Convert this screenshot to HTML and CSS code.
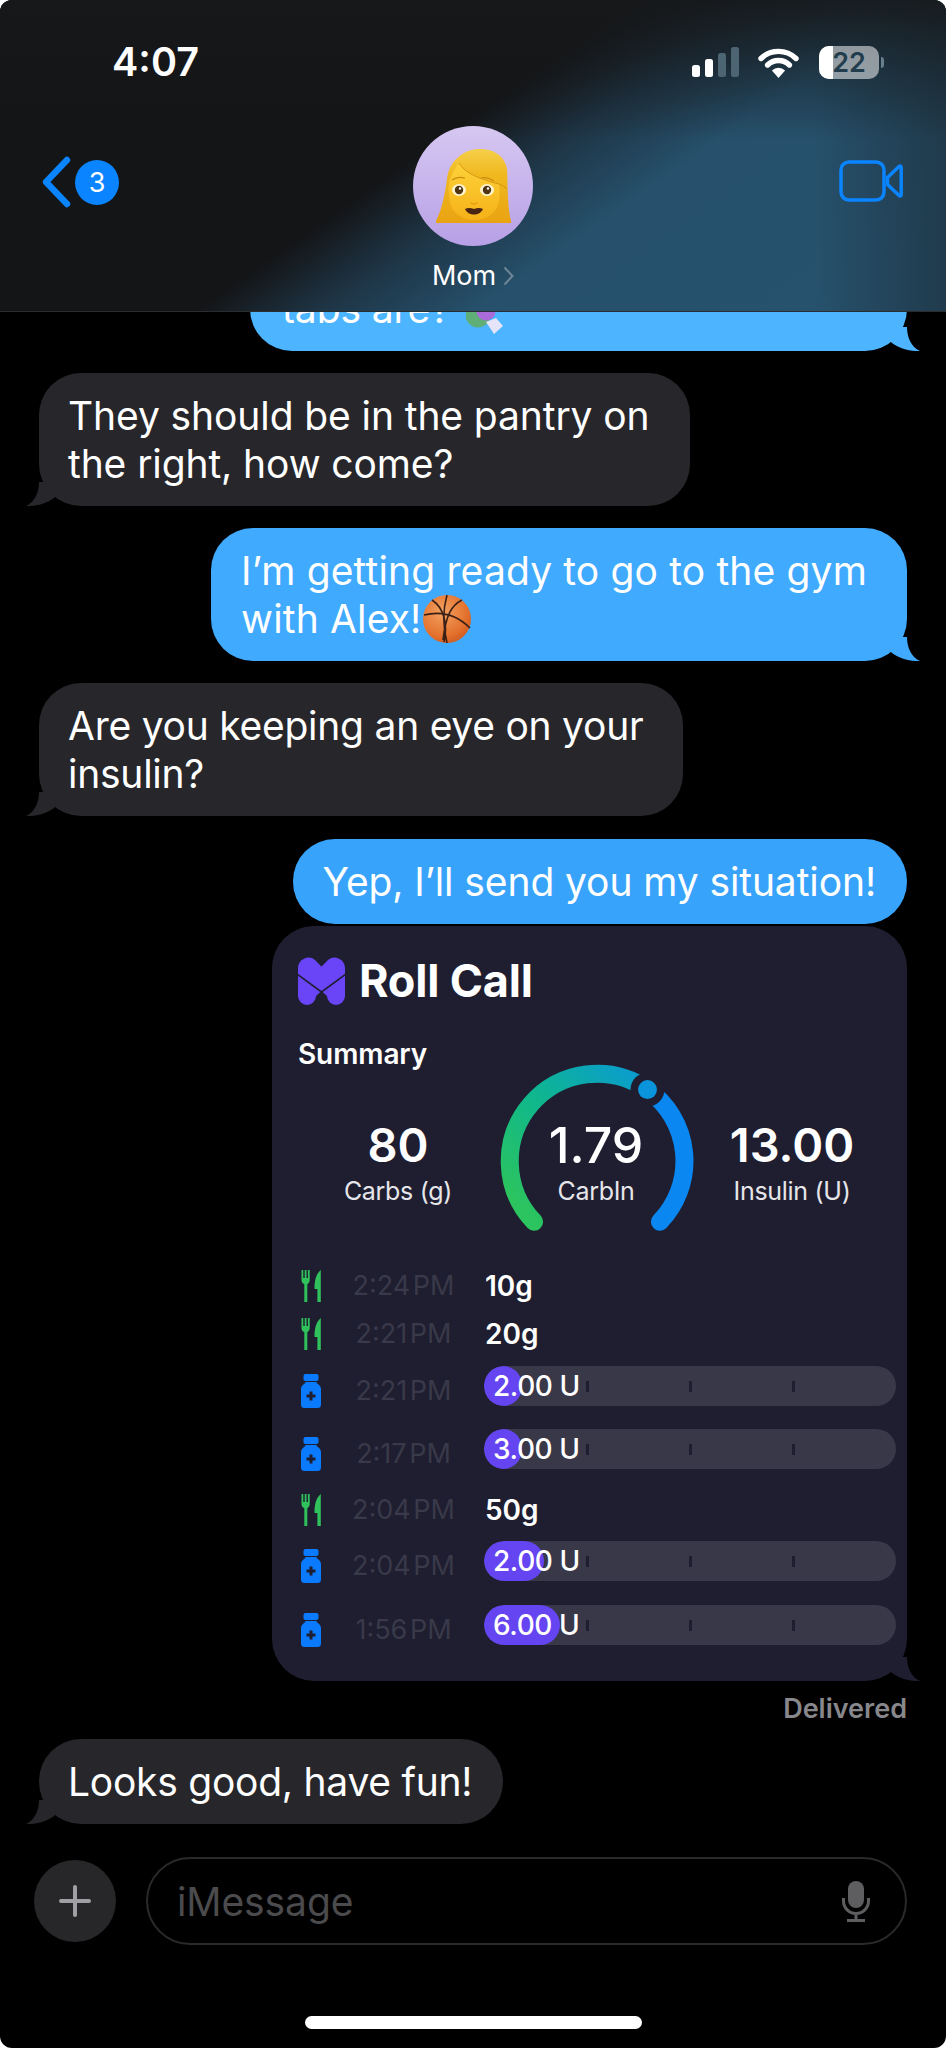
FILE: index.html
```html
<!DOCTYPE html>
<html lang="en">
<head>
    <meta charset="UTF-8">
    <meta name="viewport" content="width=device-width, initial-scale=1.0">
    <title>Mom - iMessage</title>
    <link rel="stylesheet" href="styles.css">
</head>
<body>
<div class="screen">

    <!-- Status bar and contact header -->
    <header class="header">
        <div class="status">
            <span class="clock">4:07</span>
            <div class="status-icons">
                <div class="signal">
                    <i class="bar-1"></i><i class="bar-2"></i><i class="bar-3"></i><i class="bar-4"></i>
                </div>
                <svg class="wifi" viewBox="0 0 41 31">
                    <path d="M3 11.5a25 25 0 0 1 35 0M9.6 18a15.6 15.6 0 0 1 21.8 0" fill="none" stroke="#fff" stroke-width="5.4" stroke-linecap="round"/>
                    <path d="M20.5 31l-6.6-7.6a9.6 9.6 0 0 1 13.2 0z" fill="#fff"/>
                </svg>
                <div class="battery">
                    <div class="battery-body"><span class="battery-level"></span><b>22</b></div>
                    <span class="battery-nub"></span>
                </div>
            </div>
        </div>
        <div class="nav">
            <div class="back">
                <svg class="chevron" viewBox="0 0 30 52"><path d="M26 4L5 26l21 22" fill="none" stroke="#0a84ff" stroke-width="6.4" stroke-linecap="round" stroke-linejoin="round"/></svg>
                <span class="badge">3</span>
            </div>
            <div class="contact">
                <div class="avatar">
                    <svg class="woman" viewBox="0 0 75 75">
                        <defs>
                            <linearGradient id="hair" x1="0" y1="0" x2="0" y2="1"><stop offset="0" stop-color="#f6cf4a"/><stop offset=".35" stop-color="#f0b81f"/><stop offset="1" stop-color="#e9a312"/></linearGradient>
                            <linearGradient id="face" x1="0" y1="0" x2="0" y2="1"><stop offset="0" stop-color="#fdd23a"/><stop offset="1" stop-color="#f6b118"/></linearGradient>
                        </defs>
                        <path d="M0 72C6 60 9 45 11 30 13 12 27 1 42 0c15-1 27 7 29 20 1 16 0 36 4 52v2H0z" fill="url(#hair)"/>
                        <path d="M13 35c1-8 6-15 10-21 6 11 24 17 40 21 1 7 1 14-1 21-4 10-13 15-24 15-12 0-21-7-24-17-1-6-2-13-1-19z" fill="url(#face)"/>
                        <path d="M23 14c6 11 24 17 40 21 3 1 6 3 8 5" fill="none" stroke="#d18d10" stroke-width=".8"/>
                        <ellipse cx="23" cy="41" rx="7" ry="6" fill="#fff4cf"/>
                        <ellipse cx="51" cy="41" rx="7" ry="6" fill="#fff4cf"/>
                        <circle cx="23" cy="41" r="4.2" fill="#4f3512"/>
                        <circle cx="51" cy="41" r="4.2" fill="#4f3512"/>
                        <circle cx="24" cy="39.500" r="1.200" fill="#fff"/>
                        <circle cx="52" cy="39.500" r="1.200" fill="#fff"/>
                        <path d="M16 31c4-3 9-3 13-2M45 29c4-1 9 0 13 3" fill="none" stroke="#c98a12" stroke-width="1.200"/>
                        <path d="M29 60c3-1.500 6-1 9 0 3-1 6-1.500 9 0-2 4-5 5.500-9 5.500s-7-1.500-9-5.500z" fill="#4a2513"/>
                        <path d="M35 54c2 1.500 4 1.500 6 0" fill="none" stroke="#e39c10" stroke-width="1.400" stroke-linecap="round"/>
                    </svg>
                </div>
                <div class="contact-name">Mom <svg class="name-chevron" viewBox="0 0 11 20"><path d="M1.500 1.500L9.500 10l-8 8.500" fill="none" stroke="#6f8796" stroke-width="2"/></svg></div>
            </div>
            <svg class="video" viewBox="0 0 64 44">
                <rect x="2" y="3" width="43" height="38" rx="8" fill="none" stroke="#0a84ff" stroke-width="3.500"/>
                <path d="M48.500 18.500L60 7.500c1.200-1 2.200-.5 2.200 1v27c0 1.500-1 2-2.200 1L48.500 25.500z" fill="none" stroke="#0a84ff" stroke-width="3.500" stroke-linejoin="round"/>
            </svg>
        </div>
    </header>

    <!-- Conversation -->
    <main class="thread">
        <div class="bubble sent clipped tone-1">
            <p>tabs are?<svg class="pill" viewBox="0 0 37 36">
                    <circle cx="12" cy="17" r="12.500" fill="#5fae78"/>
                    <circle cx="20" cy="13" r="9.500" fill="#a86bd8"/>
                    <path d="M20 24l10-4 7 8-9 8z" fill="#e6e4f8"/>
                </svg></p>
            <svg class="tail" viewBox="0 0 34 24"><use href="#tail-shape"/></svg>
        </div>

        <div class="bubble received wide">
            <p>They should be in the pantry on<br>the right, how come?</p>
            <svg class="tail" viewBox="0 0 34 24"><use href="#tail-shape"/></svg>
        </div>

        <div class="bubble sent wide tone-2">
            <p>I’m getting ready to go to the gym<br>with Alex!<svg class="ball" viewBox="0 0 48 48">
                <defs><radialGradient id="orange" cx=".4" cy=".35" r=".75"><stop offset="0" stop-color="#f4a262"/><stop offset=".7" stop-color="#e3702c"/><stop offset="1" stop-color="#c9541c"/></radialGradient></defs>
                <circle cx="24" cy="24" r="24" fill="url(#orange)"/>
                <path d="M24 0c-4 14-4 32 0 48M1 20c16-4 32-1 46 13M9 5c12 8 16 24 12 42M39 5c-10 5-16 14-19 40" fill="none" stroke="#3a2015" stroke-width="1.600"/>
            </svg></p>
            <svg class="tail" viewBox="0 0 34 24"><use href="#tail-shape"/></svg>
        </div>

        <div class="bubble received wide tight">
            <p>Are you keeping an eye on your<br>insulin?</p>
            <svg class="tail" viewBox="0 0 34 24"><use href="#tail-shape"/></svg>
        </div>

        <div class="bubble sent tone-3">
            <p>Yep, I’ll send you my situation!</p>
        </div>

        <!-- Roll Call card -->
        <section class="card">
            <div class="card-title">
                <svg class="logo" viewBox="0 0 47 48">
                    <path d="M23.500 9.500L17 3A10.500 10.500 0 0 0 0 11v28a9 9 0 0 0 18 0l5.500-5 5.500 5a9 9 0 0 0 18 0V11A10.500 10.500 0 0 0 30 3z" fill="#6a45f7"/>
                    <path d="M-1 17l24.500 18L48 17" fill="none" stroke="#1e1e30" stroke-width="1.600"/>
                </svg>
                <h2>Roll Call</h2>
            </div>
            <h3 class="summary-title">Summary</h3>
            <div class="summary">
                <div class="stat">
                    <strong>80</strong>
                    <span>Carbs (g)</span>
                </div>
                <div class="gauge">
                    <svg class="gauge-arc" viewBox="0 0 194 170">
                        <defs>
                            <linearGradient id="arcGreen" gradientUnits="userSpaceOnUse" x1="25" y1="150" x2="150" y2="20"><stop offset="0" stop-color="#2cc45e"/><stop offset=".5" stop-color="#0fb78c"/><stop offset="1" stop-color="#0a9ccf"/></linearGradient>
                        </defs>
                        <path d="M34.100 157.800A87.500 87.500 0 0 1 147.500 25.600" fill="none" stroke="url(#arcGreen)" stroke-width="18" stroke-linecap="round"/>
                        <path d="M147.500 25.600A87.500 87.500 0 0 1 159.900 157.800" fill="none" stroke="#0a87f0" stroke-width="18" stroke-linecap="round"/>
                        <circle cx="147.500" cy="25.600" r="17" fill="#1e1e30"/>
                        <circle cx="147.500" cy="25.600" r="9.500" fill="#0a94dc"/>
                    </svg>
                    <div class="stat stat-center">
                        <strong>1.79</strong>
                        <span>CarbIn</span>
                    </div>
                </div>
                <div class="stat">
                    <strong>13.00</strong>
                    <span>Insulin (U)</span>
                </div>
            </div>

            <div class="log">
                <div class="log-row meal">
                    <svg class="icon-meal"><use href="#fork-knife"/></svg>
                    <span class="log-time">2:24 PM</span>
                    <span class="log-amount">10g</span>
                </div>
                <div class="log-row meal">
                    <svg class="icon-meal"><use href="#fork-knife"/></svg>
                    <span class="log-time">2:21 PM</span>
                    <span class="log-amount">20g</span>
                </div>
                <div class="log-row dose">
                    <svg class="icon-dose"><use href="#bottle"/></svg>
                    <span class="log-time">2:21 PM</span>
                    <div class="dose-bar">
                        <div class="dose-fill" style="width: 38px"></div>
                        <span class="dose-label">2.00 U</span>
                        <div class="ticks"><i></i><i></i><i></i></div>
                    </div>
                </div>
                <div class="log-row dose">
                    <svg class="icon-dose"><use href="#bottle"/></svg>
                    <span class="log-time">2:17 PM</span>
                    <div class="dose-bar">
                        <div class="dose-fill" style="width: 38px"></div>
                        <span class="dose-label">3.00 U</span>
                        <div class="ticks"><i></i><i></i><i></i></div>
                    </div>
                </div>
                <div class="log-row meal late">
                    <svg class="icon-meal"><use href="#fork-knife"/></svg>
                    <span class="log-time">2:04 PM</span>
                    <span class="log-amount">50g</span>
                </div>
                <div class="log-row dose tall">
                    <svg class="icon-dose"><use href="#bottle"/></svg>
                    <span class="log-time">2:04 PM</span>
                    <div class="dose-bar">
                        <div class="dose-fill" style="width: 60px"></div>
                        <span class="dose-label">2.00 U</span>
                        <div class="ticks"><i></i><i></i><i></i></div>
                    </div>
                </div>
                <div class="log-row dose">
                    <svg class="icon-dose"><use href="#bottle"/></svg>
                    <span class="log-time">1:56 PM</span>
                    <div class="dose-bar">
                        <div class="dose-fill" style="width: 76px"></div>
                        <span class="dose-label">6.00 U</span>
                        <div class="ticks"><i></i><i></i><i></i></div>
                    </div>
                </div>
            </div>
            <svg class="tail" viewBox="0 0 34 24"><use href="#tail-shape"/></svg>
        </section>

        <div class="delivered">Delivered</div>

        <div class="bubble received tight">
            <p>Looks good, have fun!</p>
            <svg class="tail" viewBox="0 0 34 24"><use href="#tail-shape"/></svg>
        </div>
    </main>

    <!-- Message box -->
    <footer class="composer">
        <div class="plus">
            <svg viewBox="0 0 32 32"><path d="M16 2v28M2 16h28" stroke="#a0a0a4" stroke-width="4" stroke-linecap="round"/></svg>
        </div>
        <div class="input">
            <span class="placeholder">iMessage</span>
            <svg class="mic" viewBox="0 0 28 41">
                <rect x="6" y="0" width="16" height="27" rx="8" fill="#5e5e60"/>
                <path d="M1.500 17v3a12.500 12.500 0 0 0 25 0v-3M14 33v6M5 39.500h18" fill="none" stroke="#5e5e60" stroke-width="3"/>
            </svg>
        </div>
    </footer>
    <div class="home-bar"></div>
</div>

<!-- Shared shapes -->
<svg class="defs" width="0" height="0">
    <defs>
        <path id="tail-shape" d="M20 0c0 10 4 20 13 24C24 24.500 12 22 3.700 15L0 0z"/>
    </defs>
    <symbol id="fork-knife" viewBox="0 0 20 32">
        <path d="M.5 0h1.800v8h1.400V0h1.800v8h1.400V0h1.800v10c0 2.500-1.200 3.500-2.400 4.200V32H3.300V14.200C1.800 13.500.5 12.500.5 10z" fill="#30c05c"/>
        <path d="M19.800 0v32h-3.400V19h-2.900c0-8 1.300-15 6.300-19z" fill="#30c05c"/>
    </symbol>
    <symbol id="bottle" viewBox="0 0 20 34">
        <rect x="2.500" width="15" height="7" rx="2" fill="#0a7bff"/>
        <path d="M4.500 8h11c0 2 4.500 3 4.500 7v15.500a3.500 3.500 0 0 1-3.500 3.500h-13A3.500 3.500 0 0 1 0 30.500V15c0-4 4.500-5 4.500-7z" fill="#0a7bff"/>
        <path d="M8.500 17.500h3v3h3v3h-3v3h-3v-3h-3v-3h3z" fill="#1e1e30"/>
    </symbol>
</svg>
</body>
</html>
```

FILE: styles.css
```css
* {
    box-sizing: border-box;
}
body {
    margin: 0;
    background: #fff;
    font-family: Inter, "Noto Sans", sans-serif;
    color: #fff;
}
p, h2, h3 {
    margin: 0;
}
.defs {
    position: absolute;
}
.screen {
    width: 946px;
    height: 2048px;
    background: #000;
    border-radius: 12px;
    overflow: hidden;
    display: flex;
    flex-direction: column;
}

/* Header */
.header {
    height: 312px;
    flex: none;
    position: relative;
    z-index: 2;
    border-bottom: 1px solid #2a2c2e;
    background:
        linear-gradient(180deg, rgba(22, 24, 26, 0.9) 0, rgba(22, 24, 26, 0) 45%),
        linear-gradient(270deg, rgba(22, 24, 26, 0.4) 0, rgba(22, 24, 26, 0) 14%),
        linear-gradient(145deg, #141517 0%, #141517 46%, #1e3546 55%, #26506b 66%, #27526e 100%);
}
.status {
    display: flex;
    justify-content: space-between;
    padding: 44px 62px 0 112px;
    height: 126px;
}
.clock {
    font-size: 39.5px;
    font-weight: 600;
    line-height: 36px;
}
.status-icons {
    display: flex;
    gap: 19px;
    height: 34px;
    align-items: flex-start;
}
.signal {
    display: flex;
    align-items: flex-end;
    gap: 5px;
    height: 33px;
}
.signal i {
    width: 8px;
    border-radius: 2.5px;
    background: #fff;
}
.signal .bar-1 { height: 12px; }
.signal .bar-2 { height: 18px; }
.signal .bar-3 { height: 24px; background: #4d6572; }
.signal .bar-4 { height: 30px; background: #4d6572; }
.wifi {
    width: 41px;
    height: 31px;
    margin-top: 3px;
}
.battery {
    display: flex;
    align-items: center;
    gap: 2px;
    margin-top: 2px;
    margin-left: 1px;
}
.battery-body {
    width: 60px;
    height: 33px;
    border-radius: 10px;
    background: rgba(255, 255, 255, 0.52);
    overflow: hidden;
    position: relative;
    text-align: center;
    color: #223d4d;
    font-size: 27px;
    line-height: 33px;
}
.battery-body b {
    position: relative;
    font-weight: 600;
}
.battery-level {
    position: absolute;
    left: 0;
    top: 0;
    bottom: 0;
    width: 14px;
    background: #fff;
}
.battery-nub {
    width: 3px;
    height: 11px;
    border-radius: 0 3px 3px 0;
    background: #66808e;
}
.nav {
    display: grid;
    grid-template-columns: 1fr auto 1fr;
    padding: 0 43px 0 41px;
    align-items: start;
}
.back {
    display: flex;
    align-items: center;
    gap: 4px;
    margin-top: 30px;
}
.chevron {
    width: 30px;
    height: 52px;
}
.badge {
    width: 44px;
    height: 45px;
    border-radius: 50%;
    background: #0a84ff;
    text-align: center;
    font-size: 27px;
    line-height: 45px;
}
.contact {
    display: flex;
    flex-direction: column;
    align-items: center;
    margin-left: 2px;
}
.avatar {
    width: 120px;
    height: 120px;
    border-radius: 50%;
    background: linear-gradient(#d6c7f1, #b7a0e6);
    display: flex;
    align-items: center;
    justify-content: center;
}
.woman {
    width: 75px;
    height: 75px;
}
.contact-name {
    margin-top: 15px;
    font-size: 27px;
    line-height: 30px;
    display: flex;
    align-items: center;
    gap: 7px;
}
.name-chevron {
    width: 11px;
    height: 20px;
}
.video {
    justify-self: end;
    width: 64px;
    height: 44px;
    margin-top: 33px;
}

/* Messages */
.thread {
    flex: 1;
    min-height: 0;
    display: flex;
    flex-direction: column;
    padding: 0 39px;
}
.bubble {
    position: relative;
    flex: none;
    font-size: 39px;
    line-height: 48px;
    letter-spacing: -0.1px;
    padding: 18.5px 31px 18.5px 30px;
    border-radius: 42px;
    white-space: nowrap;
}
.bubble.wide {
    padding-right: 40px;
}
.bubble.tight {
    letter-spacing: -0.25px;
}
.tail {
    position: absolute;
    bottom: 0;
    width: 34px;
    height: 24px;
    fill: currentColor;
}
.sent {
    align-self: flex-end;
    background: #42abff;
}
.sent .tail, .card .tail {
    right: -14px;
}
.received {
    align-self: flex-start;
    background: #27272b;
    margin-top: 22px;
    padding-left: 29px;
}
.received .tail {
    left: -14px;
    transform: scaleX(-1);
    color: #27272b;
}
.bubble + .sent {
    margin-top: 22px;
}
.clipped {
    width: 657px;
    height: 85px;
    margin-top: -46px;
    padding-left: 32px;
}
.tone-1 { background: #4db4ff; }
.tone-1 .tail { color: #4db4ff; }
.tone-2 { background: #40aaff; letter-spacing: 0.15px; }
.tone-2 .tail { color: #40aaff; }
.bubble.tone-3 { background: #38a3fb; margin-top: 23px; }
.pill {
    width: 37px;
    height: 36px;
    margin: -15px 0 -11px 16px;
}
.ball {
    width: 48px;
    height: 48px;
    margin: -10px 0 -10px 2px;
}

/* Roll Call card */
.card {
    position: relative;
    flex: none;
    align-self: flex-end;
    width: 635px;
    height: 755px;
    margin-top: 2px;
    padding: 31px 11px 0 26px;
    border-radius: 42px;
    background: #1e1e30;
}
.card .tail {
    color: #1e1e30;
}
.card-title {
    display: flex;
    align-items: center;
    gap: 14px;
}
.logo {
    width: 47px;
    height: 48px;
}
.card-title h2 {
    font-size: 45px;
    font-weight: 700;
    letter-spacing: -0.2px;
    line-height: 48px;
}
.summary-title {
    margin-top: 33px;
    font-size: 28px;
    font-weight: 600;
    line-height: 32px;
    letter-spacing: -0.1px;
}
.summary {
    display: grid;
    grid-template-columns: 200px 194px 200px;
    margin-top: -6px;
    align-items: start;
}
.stat {
    display: flex;
    flex-direction: column;
    align-items: center;
    margin-top: 56px;
}
.stat strong {
    font-size: 47px;
    font-weight: 600;
    line-height: 50px;
}
.stat span {
    margin-top: 6px;
    font-size: 25px;
    line-height: 30px;
    color: #e6e6ea;
    letter-spacing: -0.3px;
}
.gauge {
    position: relative;
    height: 170px;
    margin-left: 2px;
}
.gauge-arc {
    width: 194px;
    height: 170px;
    display: block;
}
.stat-center {
    position: absolute;
    left: 0;
    right: 0;
    top: 0;
}
.stat-center strong {
    font-size: 50px;
    font-weight: 500;
}
.log {
    margin-top: 28px;
}
.log-row {
    display: grid;
    grid-template-columns: 20px 163px 1fr;
    padding-left: 3px;
}
.meal {
    height: 48px;
    align-items: center;
}
.late {
    margin-top: 2px;
    height: 47px;
}
.dose {
    height: 63px;
    align-items: start;
}
.dose.tall {
    height: 64px;
}
.icon-meal {
    width: 20px;
    height: 32px;
}
.icon-dose {
    width: 20px;
    height: 34px;
    margin-top: 16px;
}
.log-time {
    width: 140px;
    text-align: center;
    font-size: 27px;
    line-height: 34px;
    color: #393949;
    word-spacing: -5px;
    padding-left: 1px;
    margin-left: 12px;
}
.dose .log-time {
    margin-top: 16px;
}
.log-amount {
    font-size: 28px;
    font-weight: 600;
    margin-left: 1px;
}
.dose-bar {
    position: relative;
    height: 40px;
    margin-top: 8px;
    border-radius: 20px;
    background: #393848;
    overflow: hidden;
}
.dose-fill {
    height: 40px;
    border-radius: 20px;
    background: #6544f2;
}
.dose-label {
    position: absolute;
    left: 9px;
    top: 0;
    font-size: 28px;
    font-weight: 500;
    line-height: 40px;
    letter-spacing: -0.4px;
}
.ticks {
    position: absolute;
    left: 102px;
    top: 15px;
    display: flex;
    gap: 100px;
}
.ticks i {
    width: 3px;
    height: 11px;
    background: #1e1e30;
}
.delivered {
    align-self: flex-end;
    margin-top: 13px;
    font-size: 27px;
    font-weight: 600;
    line-height: 30px;
    color: #88888c;
}
.delivered + .bubble {
    margin-top: 15px;
}

/* Message box */
.composer {
    flex: none;
    display: flex;
    align-items: center;
    gap: 30px;
    padding: 0 39px 0 34px;
    height: 88px;
}
.plus {
    width: 82px;
    height: 82px;
    border-radius: 50%;
    background: #272729;
    display: flex;
    align-items: center;
    justify-content: center;
    flex: none;
}
.plus svg {
    width: 32px;
    height: 32px;
}
.input {
    flex: 1;
    height: 88px;
    border: 2px solid #2a2a2c;
    border-radius: 44px;
    display: flex;
    align-items: center;
    justify-content: space-between;
    padding: 0 35px 0 29px;
}
.placeholder {
    font-size: 39px;
    letter-spacing: -0.1px;
    color: #4b4b4d;
}
.mic {
    width: 28px;
    height: 41px;
}
.home-bar {
    flex: none;
    width: 337px;
    height: 13px;
    margin: 71px auto 19px;
    border-radius: 7px;
    background: #fff;
}
```
